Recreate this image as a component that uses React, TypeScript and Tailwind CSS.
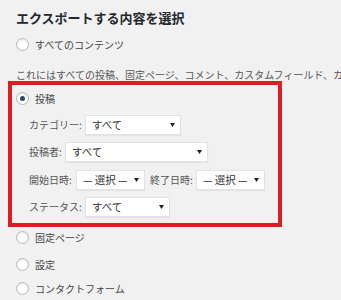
import React from "react";

const font = { fontFamily: '"Noto Sans CJK JP", "Noto Sans", sans-serif' };

function Radio({ checked = false, label }: { checked?: boolean; label: string }) {
  return (
    <div className="flex items-center h-[13px]">
      <span className="flex items-center justify-center w-[13px] h-[13px] rounded-full border border-[#b4b9be] bg-white shadow-[inset_0_1px_2px_rgba(0,0,0,0.1)]">
        {checked && <span className="w-[5px] h-[5px] rounded-full bg-[#264a6e]" />}
      </span>
      <span className="ml-[6px] text-[10px] leading-[13px] text-[#444] whitespace-nowrap">{label}</span>
    </div>
  );
}

function Select({ value, width }: { value: string; width: string }) {
  return (
    <div
      className={`${width} h-[20px] flex items-center justify-between bg-white border border-[#e2e2e2] shadow-[0_1px_1px_rgba(0,0,0,0.05)] pl-[6px] pr-[5px]`}
    >
      <span className="text-[10.5px] text-[#333] whitespace-nowrap leading-none">{value}</span>
      <svg width="5" height="4" viewBox="0 0 5 4">
        <path d="M0 0 L5 0 L2.5 4 Z" fill="#222" />
      </svg>
    </div>
  );
}

function Label({ text, width }: { text: string; width: string }) {
  return <span className={`${width} text-[10px] text-[#555] whitespace-nowrap leading-none`}>{text}</span>;
}

export default function App() {
  return (
    <div className="w-[341px] h-[300px] bg-[#f1f1f1] overflow-hidden" style={font}>
      <div className="pl-4 pt-[9px]">
        <h2 className="h-[18px] leading-[18px] text-[13px] font-bold text-[#23282d] whitespace-nowrap">
          エクスポートする内容を選択
        </h2>
        <div className="mt-[11px]">
          <Radio label="すべてのコンテンツ" />
        </div>
        <p className="mt-[18px] h-[12px] leading-[12px] text-[10px] text-[#555] whitespace-nowrap">
          これにはすべての投稿、固定ページ、コメント、カスタムフィールド、カテゴリー、タグが含まれます。
        </p>
      </div>
      <div className="ml-2 w-[274px] border-4 border-[#e01b24] pl-1 pt-[7px] pb-[6px]">
        <Radio checked label="投稿" />
        <div className="pl-[13px]">
          <div className="mt-[10px] flex items-center">
            <Label text="カテゴリー:" width="w-[56px]" />
            <Select value="すべて" width="w-[96px]" />
          </div>
          <div className="mt-[7px] flex items-center">
            <Label text="投稿者:" width="w-[36px]" />
            <Select value="すべて" width="w-[143px]" />
          </div>
          <div className="mt-[8px] flex items-center">
            <Label text="開始日時:" width="w-[47px]" />
            <Select value="— 選択 —" width="w-[69px]" />
            <Label text="終了日時:" width="w-[46px] ml-[5px]" />
            <Select value="— 選択 —" width="w-[69px]" />
          </div>
          <div className="mt-[7px] flex items-center">
            <Label text="ステータス:" width="w-[56px]" />
            <Select value="すべて" width="w-[85px]" />
          </div>
        </div>
      </div>
      <div className="pl-4">
        <div className="mt-[4px]">
          <Radio label="固定ページ" />
        </div>
        <div className="mt-[14px]">
          <Radio label="設定" />
        </div>
        <div className="mt-[11px]">
          <Radio label="コンタクトフォーム" />
        </div>
      </div>
    </div>
  );
}
